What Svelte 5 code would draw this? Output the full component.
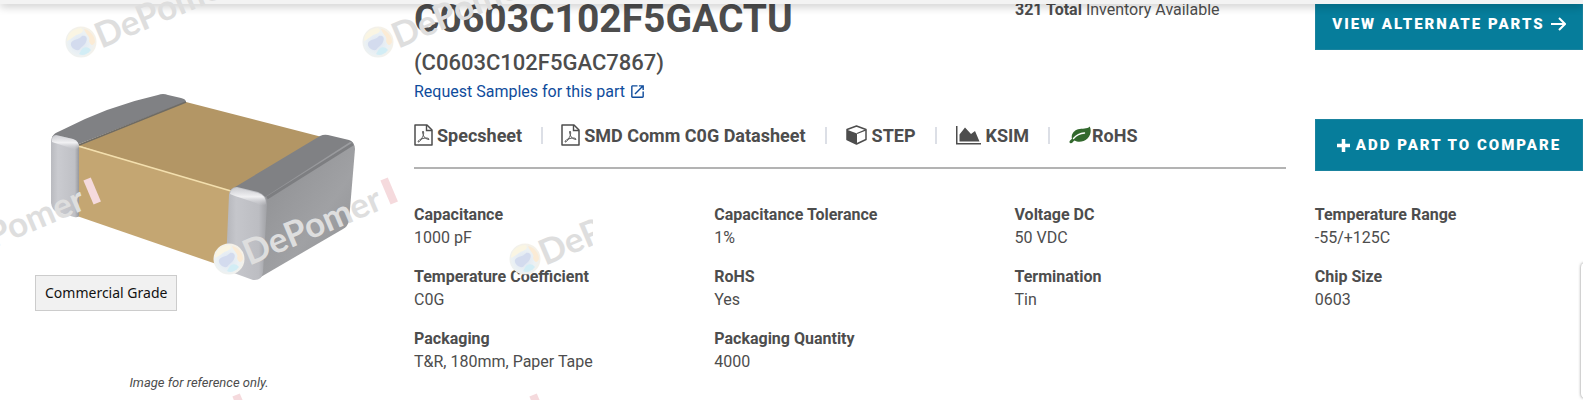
<script>

    const specs = [
        { label: "Capacitance", value: "1000 pF" },
        { label: "Capacitance Tolerance", value: "1%" },
        { label: "Voltage DC", value: "50 VDC" },
        { label: "Temperature Range", value: "-55/+125C" },
        { label: "Temperature Coefficient", value: "C0G" },
        { label: "RoHS", value: "Yes" },
        { label: "Termination", value: "Tin" },
        { label: "Chip Size", value: "0603" },
        { label: "Packaging", value: "T&R, 180mm, Paper Tape" },
        { label: "Packaging Quantity", value: "4000" }
    ];

    const resources = [
        { icon: "pdf", text: "Specsheet" },
        { icon: "pdf", text: "SMD Comm C0G Datasheet" },
        { icon: "cube", text: "STEP" },
        { icon: "chart", text: "KSIM" },
        { icon: "leaf", text: "RoHS" }
    ];

    // centre of the globe in each repeat of the watermark
    const marks = [
        [81, 42],
        [378, 42],
        [-68, 259],
        [229, 259],
        [525, 259],
        [81, 475],
        [378, 475]
    ];

</script>

<div class="page">

    <div class="topbar"></div>

    <div class="product">

        <figure class="photo">
            <svg class="chip" viewBox="50 90 306 185" role="img" aria-label="Ceramic chip capacitor">
                <defs>
                    <linearGradient id="endLeft" x1="0" y1="0" x2="1" y2="0">
                        <stop offset="0" stop-color="#b9babf" />
                        <stop offset="0.25" stop-color="#cacbd0" />
                        <stop offset="0.85" stop-color="#bfc0c5" />
                        <stop offset="1" stop-color="#96979b" />
                    </linearGradient>
                    <linearGradient id="endFront" x1="0" y1="0" x2="1" y2="0">
                        <stop offset="0" stop-color="#b4b5ba" />
                        <stop offset="0.25" stop-color="#c5c6cb" />
                        <stop offset="0.8" stop-color="#bcbdc2" />
                        <stop offset="1" stop-color="#a0a1a5" />
                    </linearGradient>
                    <linearGradient id="endSide" x1="0" y1="0" x2="1" y2="1">
                        <stop offset="0" stop-color="#8b8c8f" />
                        <stop offset="0.6" stop-color="#a0a1a4" />
                        <stop offset="1" stop-color="#8e8f92" />
                    </linearGradient>
                    <linearGradient id="shine" x1="0" y1="0" x2="0" y2="1">
                        <stop offset="0" stop-color="#f1f1f3" stop-opacity="0.2" />
                        <stop offset="0.5" stop-color="#f1f1f3" />
                        <stop offset="1" stop-color="#cacbd0" stop-opacity="0" />
                    </linearGradient>
                </defs>
                <path d="M77 145 L186 102 L322 137 L232 194 Z" fill="#b39665" />
                <path d="M77 145 L231 191 L228 268 L77 216 Z" fill="#c4a672" />
                <path d="M78 146 L231 191" stroke="#f3dfae" stroke-width="1.6" />
                <path d="M52 137 Q54 133 60 131 Q108 106 158 95 Q163 93 168 95 L181 98 Q186 99 186 102 L79 144 Q66 143 52 137 Z" fill="#808184" />
                <path d="M186 102 L79 145" stroke="#6e6b64" stroke-width="1.4" />
                <path d="M51 142 Q51 135 56 135 L73 139 Q79 141 79 148 L79 215 Q79 218 74 217 L57 212 Q52 210 51 203 Z" fill="url(#endLeft)" />
                <path d="M52 139 Q54 134 60 136 L73 139 Q79 141 79 147 L76 150 L52 142 Z" fill="url(#shine)" />
                <path d="M230 190 Q270 166 320 136 Q324 134 328 135 L349 140 Q355 142 354 148 L266 204 Q250 190 230 190 Z" fill="#808184" />
                <path d="M265 197 L350 142 Q355 143 355 149 L349 221 Q348 226 343 229 L259 278 Q256 250 265 197 Z" fill="url(#endSide)" />
                <path d="M267 198 L353 144" stroke="#7d7e81" stroke-width="3" />
                <path d="M229 195 Q230 187 237 187 L258 192 Q267 195 267 204 L263 272 Q262 281 253 280 L231 272 Q225 270 226 263 Z" fill="url(#endFront)" />
                <path d="M230 194 Q231 187 238 188 L258 193 Q266 195 266 204 Q262 208 256 203 L235 196 Z" fill="url(#shine)" />
            </svg>
            <span class="grade">Commercial Grade</span>
            <figcaption>Image for reference only.</figcaption>
        </figure>

        <div class="info">

            <div class="summary">

                <div class="details">
                    <div class="heading">
                        <div class="names">
                            <h1>C0603C102F5GACTU</h1>
                            <h2>(C0603C102F5GAC7867)</h2>
                            <a class="samples" href="#samples">
                                Request Samples for this part
                                <svg width="17" height="17" viewBox="0 0 24 24" fill="currentColor"><path d="M19 19H5V5h7V3H5c-1.11 0-2 .9-2 2v14c0 1.1.89 2 2 2h14c1.1 0 2-.9 2-2v-7h-2v7zM14 3v2h3.59l-9.83 9.83 1.41 1.41L19 6.41V10h2V3h-7z" /></svg>
                            </a>
                        </div>
                        <p class="stock"><b>321 Total</b> Inventory Available</p>
                    </div>

                    <nav class="resources">
                        {#each resources as item}
                            <a class={item.icon} href="#{item.icon}">
                                {#if item.icon == "pdf"}
                                    <svg width="19" height="22" viewBox="0 0 19 22" fill="none" stroke="currentColor">
                                        <path d="M1 1H13L18 6V21H1Z" stroke-width="1.5" stroke-linejoin="round" />
                                        <path d="M12.5 1V6.5H18" stroke-width="1.4" />
                                        <path d="M9 7C8 8 9 10 9.5 11.5C10.5 14 12 15 15 15.5C15.5 14 12 13.5 9 14.5C6 15 4 16.5 4 18C6 18.5 8 14 9 12C9.8 10 10 8 9 7" stroke-width="0.9" />
                                    </svg>
                                {:else if item.icon == "cube"}
                                    <svg width="21" height="20" viewBox="0 0 21 20">
                                        <path d="M10.5 1L20 4.500V14.5L10.5 19L1 14.5V4.500Z" fill="none" stroke="currentColor" stroke-width="1.5" stroke-linejoin="round" />
                                        <path d="M1 4.800L11 8.500V19L1 14.5Z" fill="currentColor" />
                                        <path d="M11 8.500L20 4.800" stroke="currentColor" stroke-width="1.3" />
                                    </svg>
                                {:else if item.icon == "chart"}
                                    <svg width="25" height="19" viewBox="0 0 25 19" fill="currentColor">
                                        <path d="M0 0H1.5V17H25V18.5H0Z" />
                                        <path d="M3.5 15.5V8.500L9 1.5L15 8L19 5L23.5 15.5Z" />
                                    </svg>
                                {:else}
                                    <svg width="22" height="18" viewBox="0 0 22 18">
                                        <path d="M20.7 0.5C22.5 4 22 9 18.5 12.5C14.5 16.3 9 16.5 5.5 14.5C4 15.5 3.5 17.5 1.5 17.3C-0.5 16.5 0.5 14.8 3 12.8C1.7 8.500 5 4.500 9 3.300C13.5 2 18 3.500 20.7 0.5Z" fill="#33692e" />
                                        <path d="M4.500 12.5C7 9.500 10.5 7.300 15.5 7" fill="none" stroke="#fff" stroke-width="1.4" stroke-linecap="round" />
                                    </svg>
                                {/if}
                                <span>{item.text}</span>
                            </a>
                        {/each}
                    </nav>
                </div>

                <div class="actions">
                    <button>
                        VIEW ALTERNATE PARTS
                        <svg width="15" height="14" viewBox="0 0 15 14" fill="none" stroke="currentColor" stroke-width="2"><path d="M0 7H13.5M8 1L14 7L8 13" /></svg>
                    </button>
                    <button>
                        <svg width="13" height="13" viewBox="0 0 13 13" fill="none" stroke="currentColor" stroke-width="3.5"><path d="M0 6.500H13M6.500 0V13" /></svg>
                        ADD PART TO COMPARE
                    </button>
                </div>

            </div>

            <dl class="specs">
                {#each specs as spec}
                    <div>
                        <dt>{spec.label}</dt>
                        <dd>{spec.value}</dd>
                    </div>
                {/each}
            </dl>

        </div>

    </div>

    <svg class="watermark" width="593" height="400" aria-hidden="true">
        <defs>
            <radialGradient id="globe" cx="0.45" cy="0.55" r="0.6">
                <stop offset="0" stop-color="#dde5f2" />
                <stop offset="0.6" stop-color="#ebf1f4" />
                <stop offset="1" stop-color="#f8f1e4" />
            </radialGradient>
        </defs>
        {#each marks as [x, y]}
            <g transform="translate({x} {y})">
                <circle r="15.5" fill="url(#globe)" />
                <path d="M-10 1C-8 -3 -2 -2 1 -6C5 -7 7 -4 5 0C4 3 1 4 -2 8C-6 9 -11 5 -10 1Z" fill="#d3dbee" />
                <path d="M3 -13C9 -12 14 -6 14 0C12 5 9 3 8 -1C10 -5 5 -7 3 -13Z" fill="#fbebd5" />
                <path d="M-14 -1C-14 -9 -7 -14 0 -14C4 -12 1 -9 -2 -8C-6 -7 -8 -4 -14 -1Z" fill="#faf5e3" />
                <path d="M1 7C4 4 8 5 10 8C6 13 1 14 -2 12Z" fill="#d2edf5" />
                <g transform="rotate(-23)">
                    {#if y < 400}
                        <text x="16" y="14">DePomer</text>
                    {/if}
                    <rect x="170" y="-13" width="8" height="26" fill="#f5dadd" />
                </g>
            </g>
        {/each}
    </svg>

    <div class="sidetab"></div>

</div>

<style>

    :global(body) {
        background-color: #fff;
        color: #4d4d4d;
        font-family: Roboto, sans-serif;
        font-size: 16px;
        line-height: 23px;
    }

    .page {
        position: relative;
        overflow: hidden;
    }

    .topbar {
        position: absolute;
        top: 0;
        left: 0;
        right: 0;
        height: 4px;
        background-color: #f3f3f3;
        box-shadow: 0 1px 10px rgba(0, 0, 0, 0.4);
        z-index: 2;
    }

    .product {
        display: grid;
        grid-template-columns: 414px minmax(0, 1fr);
    }

    .photo {
        display: flex;
        flex-direction: column;
        align-items: flex-start;
        margin: 0;
        padding: 90px 16px 8px 0;
    }

    .chip {
        width: 306px;
        margin-left: 50px;
        overflow: visible;
    }

    .grade {
        box-sizing: border-box;
        height: 36px;
        margin-left: 35px;
        padding: 0 9px;
        border: 1px solid #ccc;
        background-color: #f1f1f1;
        color: #111;
        font-family: "Noto Sans", sans-serif;
        font-size: 14px;
        line-height: 34px;
    }

    figcaption {
        align-self: center;
        margin-top: 60px;
        font-size: 13px;
        font-style: italic;
    }

    .summary {
        display: grid;
        grid-template-columns: minmax(0, 1fr) 268px;
        align-items: start;
        column-gap: 29px;
    }

    .details {
        border-bottom: 2px solid #b3b3b3;
    }

    .heading {
        display: grid;
        grid-template-columns: minmax(0, 1fr) 271px;
    }

    h1 {
        margin: 0;
        font-size: 39px;
        line-height: 38px;
    }

    h2 {
        margin: 12px 0 4px;
        font-size: 22px;
        font-weight: 500;
        line-height: 26px;
    }

    .samples {
        display: flex;
        align-items: center;
        gap: 4px;
        color: #0f4c9c;
        text-decoration: none;
    }

    .stock {
        margin: 0;
        line-height: 19px;
    }

    .resources {
        display: flex;
        align-items: center;
        height: 64px;
    }

    .resources a {
        display: flex;
        align-items: center;
        gap: 4px;
        color: inherit;
        font-size: 18px;
        font-weight: 700;
        text-decoration: none;
    }

    .resources a.cube,
    .resources a.chart {
        gap: 5px;
    }

    .resources a.leaf {
        gap: 1px;
    }

    .resources a + a::before {
        content: "";
        width: 2px;
        height: 17px;
        margin: 0 14px 0 19px;
        background-color: #dcdfe6;
    }

    .resources a.leaf::before {
        margin-right: 18px;
    }

    .actions {
        display: flex;
        flex-direction: column;
        gap: 69px;
        margin-top: -2px;
    }

    button {
        display: flex;
        align-items: center;
        justify-content: center;
        gap: 6px;
        height: 52px;
        padding: 0;
        border: 1px solid #1a839e;
        background-color: #067d9b;
        color: #fff;
        font-family: Roboto, sans-serif;
        font-size: 15px;
        font-weight: 900;
        letter-spacing: 2px;
    }

    .specs {
        display: grid;
        grid-template-columns: repeat(4, minmax(0, 1fr));
        gap: 16px 32px;
        margin: 32px 0 0;
    }

    dt {
        font-weight: 700;
    }

    dd {
        margin: 0;
    }

    .watermark {
        position: absolute;
        top: 0;
        left: 0;
        z-index: 3;
        pointer-events: none;
    }

    .watermark text {
        fill: #dedede;
        font-family: Lato, sans-serif;
        font-size: 35px;
        font-weight: 700;
    }

    .sidetab {
        position: absolute;
        right: -8px;
        top: 263px;
        width: 10px;
        height: 135px;
        border-radius: 4px;
        background-color: #fff;
        box-shadow: 0 0 3px rgba(0, 0, 0, 0.5);
    }

</style>
